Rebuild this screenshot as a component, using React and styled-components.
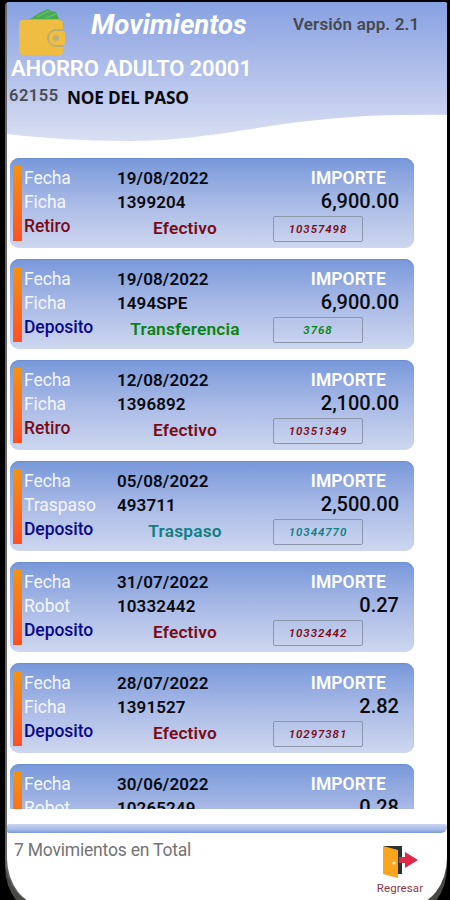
import React from 'react';
import styled, { createGlobalStyle } from 'styled-components';

const GlobalStyle = createGlobalStyle`
  * {
    box-sizing: border-box;
  }

  body {
    margin: 0;
    background: #000;
    font-family: Roboto, 'Liberation Sans', sans-serif;
  }
`;

const Phone = styled.div`
  width: 450px;
  height: 900px;
  padding: 2px 3px 0 5px;
  background: #000;
  overflow: hidden;
`;

/* a bit taller than the phone so the bottom corners run off the edge */
const Screen = styled.main`
  height: 904px;
  display: flex;
  flex-direction: column;
  background: #fff;
  border-left: 2px solid #66666a;
  border-radius: 4px 3px 38px 40px / 4px 3px 48px 48px;
  box-shadow: 0 9px 0 #484844;
  overflow: hidden;
`;

const Header = styled.header`
  position: relative;
  height: 156px;
  flex-shrink: 0;
`;

const Wave = styled.svg`
  position: absolute;
  top: 0;
  left: 0;
`;

const HeaderContent = styled.div`
  position: relative;
`;

const TitleRow = styled.div`
  display: flex;
  height: 54px;
  padding-left: 10px;
`;

const WalletIcon = styled.svg`
  width: 50px;
  height: 50px;
  margin-top: 4px;
  flex-shrink: 0;
`;

const Title = styled.h1`
  width: 202px;
  margin: 7px 0 0 24px;
  color: #fff;
  font-size: 27.5px;
  font-style: italic;
  font-weight: 700;
  line-height: 32px;
`;

const Version = styled.span`
  margin-top: 12px;
  color: #46484f;
  font-size: 17px;
  font-weight: 600;
  line-height: 20px;
  letter-spacing: 0.15px;
  white-space: nowrap;
`;

const Account = styled.h2`
  margin: 0 0 0 4px;
  color: #fff;
  font-size: 22px;
  font-weight: 600;
  line-height: 26px;
  letter-spacing: -0.15px;
`;

const Client = styled.div`
  display: flex;
  padding: 3px 0 0 2px;
  line-height: 22px;
`;

const ClientNumber = styled.span`
  width: 58px;
  color: #4a4c54;
  font-size: 16.5px;
  font-weight: 600;
  letter-spacing: 0.5px;
`;

const ClientName = styled.span`
  margin-top: 2px;
  color: #080a10;
  font-family: 'Open Sans', 'Noto Sans', sans-serif;
  font-size: 17.2px;
  font-weight: 700;
  letter-spacing: -0.2px;
`;

const List = styled.section`
  display: flex;
  flex-direction: column;
  gap: 11px;
  width: 404px;
  height: 651px;
  margin-left: 3px;
  flex-shrink: 0;
  overflow: hidden;
`;

const Card = styled.article`
  display: flex;
  height: 90px;
  padding: 8px 0 0 3px;
  flex-shrink: 0;
  border-radius: 9px;
  background: linear-gradient(#7898da, #a9bae6 50%, #ced7ef);
  box-shadow: inset 0 1px 1px #6e8dce;
`;

const Accent = styled.div`
  width: 9px;
  height: 75px;
  background: linear-gradient(#f4930f, #ff5026);
`;

const CardBody = styled.div`
  flex: 1;
  padding-left: 2px;
`;

const Row = styled.div`
  display: flex;
  height: 23.5px;
  line-height: 24px;
`;

const Label = styled.span`
  width: 93px;
  flex-shrink: 0;
  color: #f4f6fd;
  font-size: 17.5px;
  letter-spacing: -0.05px;
`;

const Value = styled.span`
  flex: 1;
  color: #080a10;
  font-size: 17px;
  font-weight: 600;
  letter-spacing: 0.1px;
`;

const AmountTitle = styled.span`
  margin-right: 28px;
  color: #fff;
  font-size: 17.5px;
  font-weight: 600;
  letter-spacing: 0.05px;
`;

const Amount = styled.span`
  margin-right: 15px;
  color: #080a10;
  font-size: 20px;
  font-weight: 500;
  line-height: 23px;
`;

const Operation = styled(Label)`
  color: ${({ $retiro }) => ($retiro ? '#790b19' : '#09098a')};
  font-weight: 500;
  line-height: 26px;
`;

const Kind = styled.span`
  width: 136px;
  color: ${({ $color }) => $color};
  font-size: 17.3px;
  font-weight: 600;
  line-height: 31px;
  letter-spacing: 0.2px;
  text-align: center;
`;

const Folio = styled.span`
  width: 90px;
  height: 26px;
  margin: 3px 0 0 20px;
  border: 1px solid #8d95ab;
  border-radius: 2px;
  color: ${({ $color }) => $color};
  font-size: 11.5px;
  font-style: italic;
  font-weight: 600;
  line-height: 24px;
  letter-spacing: 0.95px;
  text-align: center;
`;

const Divider = styled.div`
  height: 9px;
  margin-top: 15px;
  flex-shrink: 0;
  border-radius: 2px 2px 6px 2px;
  background: linear-gradient(#cbd5f1, #a9bbea 60%, #7898dc);
`;

const Footer = styled.footer`
  display: flex;
  justify-content: space-between;
  padding: 6px 22px 0 7px;
`;

const Total = styled.span`
  color: #737373;
  font-size: 17.5px;
  line-height: 22px;
  letter-spacing: -0.2px;
`;

const BackButton = styled.button`
  display: flex;
  flex-direction: column;
  align-items: center;
  width: 50px;
  padding: 4px 0 0;
  border: 0;
  background: none;
  color: #8c3a45;
  font-family: inherit;
  font-size: 11.5px;
  line-height: 15px;
  letter-spacing: 0.1px;
`;

const DoorIcon = styled.svg`
  width: 38px;
  height: 38px;
`;

// color by kind of movement
const kindColors = {
  Efectivo: '#790b19',
  Transferencia: '#078313',
  Traspaso: '#0e8083',
};

const movimientos = [
  { fecha: '19/08/2022', ref: 'Ficha', num: '1399204', importe: '6,900.00', op: 'Retiro', kind: 'Efectivo', folio: '10357498' },
  { fecha: '19/08/2022', ref: 'Ficha', num: '1494SPE', importe: '6,900.00', op: 'Deposito', kind: 'Transferencia', folio: '3768' },
  { fecha: '12/08/2022', ref: 'Ficha', num: '1396892', importe: '2,100.00', op: 'Retiro', kind: 'Efectivo', folio: '10351349' },
  { fecha: '05/08/2022', ref: 'Traspaso', num: '493711', importe: '2,500.00', op: 'Deposito', kind: 'Traspaso', folio: '10344770' },
  { fecha: '31/07/2022', ref: 'Robot', num: '10332442', importe: '0.27', op: 'Deposito', kind: 'Efectivo', folio: '10332442' },
  { fecha: '28/07/2022', ref: 'Ficha', num: '1391527', importe: '2.82', op: 'Deposito', kind: 'Efectivo', folio: '10297381' },
  // only the upper half of the last card is visible
  { fecha: '30/06/2022', ref: 'Robot', num: '10265249', importe: '0.28' },
];

const Movimiento = ({ item }) => (
  <Card>
    <Accent />
    <CardBody>
      <Row>
        <Label>Fecha</Label>
        <Value>{item.fecha}</Value>
        <AmountTitle>IMPORTE</AmountTitle>
      </Row>
      <Row>
        <Label>{item.ref}</Label>
        <Value>{item.num}</Value>
        <Amount>{item.importe}</Amount>
      </Row>
      {item.op && (
        <Row>
          <Operation $retiro={item.op === 'Retiro'}>{item.op}</Operation>
          <Kind $color={kindColors[item.kind]}>{item.kind}</Kind>
          <Folio $color={kindColors[item.kind]}>{item.folio}</Folio>
        </Row>
      )}
    </CardBody>
  </Card>
);

const App = () => {
  return (
    <>
      <GlobalStyle />
      <Phone>
        <Screen>
          <Header>
            <Wave width="440" height="145" viewBox="0 0 440 145">
              <defs>
                <linearGradient id="sky" x1="0" y1="0" x2="0" y2="1">
                  <stop offset="0" stopColor="#87a1e2" />
                  <stop offset="0.45" stopColor="#adbce9" />
                  <stop offset="1" stopColor="#d9dff3" />
                </linearGradient>
              </defs>
              <path d="M0 0H440V113C375 112 325 115 270 123C215 131 175 139 123 139C75 139 35 136 0 132Z" fill="url(#sky)" />
            </Wave>
            <HeaderContent>
              <TitleRow>
                <WalletIcon viewBox="0 0 50 50">
                  <path d="M13 13 22 7 31 3 34 5 39 6 42 13Z" fill="#48ad50" />
                  <path d="M20 11 32 5M29 12 39 8" stroke="#77bd86" strokeWidth="1" />
                  <rect x="2" y="14" width="44" height="35" rx="4" fill="#efbd41" />
                  <path d="M46 24H39A8 8 0 0 0 39 40H46" fill="#efbd41" stroke="#b9ad77" strokeWidth="2" />
                  <path d="M39 25H46Q48 25 48 28V37Q48 39 46 39H39A7 7 0 0 1 39 25Z" fill="#efbd41" />
                  <circle cx="39" cy="32" r="3" fill="#bcaf7c" />
                </WalletIcon>
                <Title>Movimientos</Title>
                <Version>Versión app. 2.1</Version>
              </TitleRow>
              <Account>AHORRO ADULTO 20001</Account>
              <Client>
                <ClientNumber>62155</ClientNumber>
                <ClientName>NOE DEL PASO</ClientName>
              </Client>
            </HeaderContent>
          </Header>
          <List>
            {movimientos.map((item) => (
              <Movimiento key={item.num} item={item} />
            ))}
          </List>
          <Divider />
          <Footer>
            <Total>7 Movimientos en Total</Total>
            <BackButton>
              <DoorIcon viewBox="0 0 38 38">
                <path d="M3 3H21V31H3Z" fill="#263239" />
                <path d="M2 3 17 7V35L2 31Z" fill="#faa51d" />
                <circle cx="13" cy="20" r="1.5" fill="#fff0c5" />
                <path d="M18 14H24V9L37 17 24 25V20H18Z" fill="#df2948" />
              </DoorIcon>
              Regresar
            </BackButton>
          </Footer>
        </Screen>
      </Phone>
    </>
  );
};

export default App;
